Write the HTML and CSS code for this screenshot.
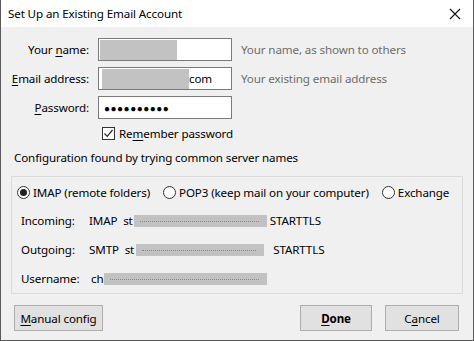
FILE: index.html
```html
<!DOCTYPE html>
<html lang="en">
  <head>
    <meta charset="UTF-8" />
    <title>Set Up an Existing Email Account</title>
    <link rel="stylesheet" href="styles.css">
  </head>
  <body>
    <div class="window">
      <div class="titlebar">
        <span>Set Up an Existing Email Account</span>
        <svg class="close" width="12" height="12" viewBox="0 0 12 12">
          <path d="M1 1 L11 11 M11 1 L1 11" stroke="#111" stroke-width="1.1" />
        </svg>
      </div>

      <div class="content">
        <div class="form">
          <label>Your <u>n</u>ame:</label>
          <div class="input"><span class="redact name-redact"></span></div>
          <div class="hint">Your name, as shown to others</div>

          <label><u>E</u>mail address:</label>
          <div class="input"><span class="redact email-redact"></span>com</div>
          <div class="hint">Your existing email address</div>

          <label><u>P</u>assword:</label>
          <div class="input dots">●●●●●●●●●●</div>
          <div></div>
        </div>

        <div class="remember">
          <span class="checkbox">
            <svg width="11" height="11" viewBox="0 0 11 11">
              <path d="M1.5 5.5 L4.2 8.3 L9.5 2" stroke="#222" stroke-width="1.2" fill="none" />
            </svg>
          </span>
          <span>Re<u>m</u>ember password</span>
        </div>

        <div class="found">Configuration found by trying common server names</div>

        <div class="panel">
          <div class="protocols">
            <div class="radio-item"><span class="radio checked"></span>IMAP (remote folders)</div>
            <div class="radio-item"><span class="radio"></span>POP3 (keep mail on your computer)</div>
            <div class="radio-item"><span class="radio"></span>Exchange</div>
          </div>
          <div class="server-row">
            <span class="server-label">Incoming:</span>
            <span class="server-value">IMAP&nbsp; st<span class="redact server-redact in"></span>STARTTLS</span>
          </div>
          <div class="server-row">
            <span class="server-label">Outgoing:</span>
            <span class="server-value">SMTP&nbsp; st<span class="redact server-redact out"></span>STARTTLS</span>
          </div>
          <div class="server-row">
            <span class="server-label">Username:</span>
            <span class="server-value user">ch<span class="redact server-redact usr"></span></span>
          </div>
        </div>

        <div class="buttons">
          <button class="btn manual"><u>M</u>anual config</button>
          <div class="right-buttons">
            <button class="btn done"><u>D</u>one</button>
            <button class="btn cancel">C<u>a</u>ncel</button>
          </div>
        </div>
      </div>
    </div>
  </body>
</html>
```

FILE: styles.css
```css
body {
  margin: 0;
  font-family: "Noto Sans", "Open Sans", sans-serif;
  font-size: 11.6px;
  letter-spacing: -0.12px;
  color: #000;
}

u {
  text-decoration-thickness: 1px;
  text-underline-offset: 2px;
}

.window {
  width: 474px;
  height: 341px;
  box-sizing: border-box;
  border: 1px solid #5a5a5a;
  border-top: none;
  background: #f0f0f0;
  overflow: hidden;
}

.titlebar {
  height: 27px;
  background: #fff;
  display: flex;
  align-items: center;
  justify-content: space-between;
  padding: 0 12px 0 7px;
}

.close {
  display: block;
}

.content {
  padding-top: 11px;
}

.form {
  display: grid;
  grid-template-columns: 88px 134px auto;
  grid-auto-rows: 23px;
  column-gap: 9px;
  row-gap: 6px;
  align-items: center;
}

.form label {
  text-align: right;
}

.input {
  height: 23px;
  box-sizing: border-box;
  border: 1px solid #7a7a7a;
  background: #fff;
  display: flex;
  align-items: center;
  padding-left: 1px;
}

.hint {
  color: #6d6d6d;
}

.redact {
  display: inline-block;
  background: #c2c2c2;
  position: relative;
}

.name-redact {
  width: 77px;
  height: 20px;
}

.email-redact {
  width: 87px;
  height: 20px;
  margin-left: 2px;
}

.dots {
  font-size: 10px;
  letter-spacing: 0.5px;
  padding-left: 5px;
}

.remember {
  display: flex;
  align-items: center;
  gap: 4px;
  margin: 7px 0 0 101px;
  height: 15px;
}

.checkbox {
  width: 13px;
  height: 13px;
  box-sizing: border-box;
  border: 1px solid #333;
  background: #fff;
  display: flex;
  align-items: center;
  justify-content: center;
}

.found {
  margin: 9px 0 0 13px;
}

.panel {
  margin: 11px 10px 0 10px;
  height: 118px;
  box-sizing: border-box;
  border: 1px solid #dcdcdc;
  padding: 0 0 0 5px;
}

.protocols {
  display: flex;
  height: 28px;
  align-items: center;
  margin-top: 1px;
  gap: 13px;
  white-space: nowrap;
}

.radio-item {
  display: flex;
  align-items: center;
  gap: 3px;
}

.radio {
  width: 13px;
  height: 13px;
  box-sizing: border-box;
  border: 1px solid #333;
  border-radius: 50%;
  background: #fff;
  display: flex;
  align-items: center;
  justify-content: center;
}

.radio.checked::after {
  content: "";
  width: 7px;
  height: 7px;
  border-radius: 50%;
  background: #222;
}

.server-row {
  display: flex;
  align-items: center;
  height: 29px;
  white-space: nowrap;
}

.server-label {
  width: 72px;
  padding-left: 4px;
  box-sizing: border-box;
}

.server-value {
  display: flex;
  align-items: center;
}

.server-value.user {
  padding-left: 2px;
}

.server-redact {
  height: 12px;
  margin-right: 3px;
}

.server-redact::after {
  content: "";
  position: absolute;
  left: 6px;
  right: 8px;
  top: 6px;
  border-top: 1px dotted #8a8a8a;
}

.server-redact.in {
  width: 133px;
  margin-left: 1px;
}

.server-redact.out {
  width: 128px;
  margin-left: 2px;
  margin-right: 9px;
}

.server-redact.usr {
  width: 163px;
  margin-left: 0;
}

.buttons {
  display: flex;
  justify-content: space-between;
  margin: 11px 14px 0 13px;
}

.right-buttons {
  display: flex;
  gap: 13px;
}

.btn {
  font-family: inherit;
  font-size: 11.6px;
  letter-spacing: -0.12px;
  height: 26px;
  background: #e1e1e1;
  border: 1px solid #adadad;
  border-radius: 0;
  color: #000;
  padding: 0;
}

.manual {
  width: 89px;
}

.done {
  width: 72px;
  font-weight: bold;
}

.cancel {
  width: 74px;
}
```
